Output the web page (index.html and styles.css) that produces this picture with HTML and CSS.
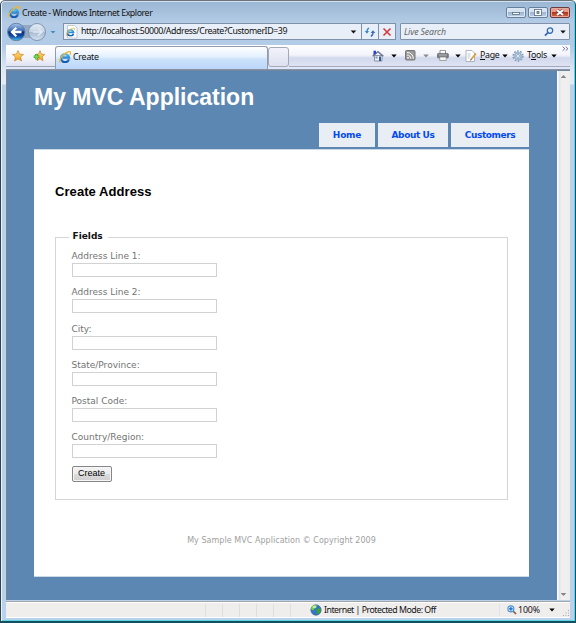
FILE: index.html
```html
<!DOCTYPE html>
<html lang="en">
<head>
<meta charset="utf-8">
<title>Create</title>
<link rel="stylesheet" href="styles.css">
</head>
<body>
<svg class="defs" width="0" height="0" aria-hidden="true">
  <defs>
    <linearGradient id="eBlue" x1="0" y1="0" x2="0" y2="1"><stop offset="0" stop-color="#49b5ee"/><stop offset="1" stop-color="#1358b0"/></linearGradient>
    <linearGradient id="back" x1="0" y1="0" x2="0" y2="1"><stop offset="0" stop-color="#a9c7ee"/><stop offset=".42" stop-color="#3c6cb8"/><stop offset=".5" stop-color="#0a2f7c"/><stop offset=".75" stop-color="#1450a8"/><stop offset="1" stop-color="#45c6f5"/></linearGradient>
    <linearGradient id="fwd" x1="0" y1="0" x2="0" y2="1"><stop offset="0" stop-color="#e4edf7"/><stop offset=".48" stop-color="#c6d3e2"/><stop offset=".52" stop-color="#a9bbd0"/><stop offset="1" stop-color="#d3e3f3"/></linearGradient>
    <linearGradient id="gold" x1="0" y1="0" x2="0" y2="1"><stop offset="0" stop-color="#ffe98a"/><stop offset="1" stop-color="#f59a16"/></linearGradient>
    <symbol id="ie" viewBox="0 0 12 12">
      <path d="M9.900 8.300A4 4 0 1 1 10 6.500H3.600" fill="none" stroke="url(#eBlue)" stroke-width="2.300"/>
      <path d="M1.400 11.400C-.2 10.600.9 7.400 3.800 4.400 7.100 1.200 10.400-.1 11.400 1c.5.600.2 1.800-.5 2.900" fill="none" stroke="#f2b632" stroke-width="1.300"/>
    </symbol>
  </defs>
</svg>
<div class="window">
  <header class="titlebar">
    <svg class="ie" width="12" height="12"><use href="#ie"/></svg>
    <span class="caption">Create - Windows Internet Explorer</span>
    <div class="winbtns">
      <span class="wb"><svg width="18" height="9"><rect x="5.500" y="4.500" width="7" height="2" fill="#fff" stroke="#5b6b7d" stroke-width=".8"/></svg></span>
      <span class="wb"><svg width="18" height="9"><rect x="5.500" y="1.500" width="7" height="6" fill="#fff" stroke="#5b6b7d" stroke-width=".8"/><rect x="8" y="3.500" width="2" height="2" fill="#93a9c1" stroke="#5b6b7d" stroke-width=".8"/></svg></span>
      <span class="wb close"><svg width="18" height="9"><path d="M6 2l6 5M12 2L6 7" stroke="#70403f" stroke-width="3.200"/><path d="M6 2l6 5M12 2L6 7" stroke="#fff" stroke-width="1.900"/></svg></span>
    </div>
  </header>

  <div class="navrow">
    <svg class="travel" width="57" height="20" viewBox="0 0 57 20">
      <rect x="7" y="3" width="27" height="13" fill="#92a9c4"/>
      <circle cx="10.300" cy="10" r="8.700" fill="url(#back)" stroke="#6b83a5"/>
      <path d="M15.500 10H6.500M10.300 5.800L6 10l4.300 4.200" fill="none" stroke="#fff" stroke-width="2.300"/>
      <circle cx="31" cy="10" r="8.500" fill="url(#fwd)" stroke="#8094b0"/>
      <path d="M27 10h8.500M32 6.500l4 3.500-4 3.500" fill="none" stroke="#dfe9f3" stroke-width="1.500"/>
      <path d="M44.500 9h5l-2.500 2.500z" fill="#4689bf"/>
    </svg>
    <div class="address">
      <svg class="pageicon" width="12" height="14" viewBox="0 0 12 14"><path d="M1.500.5h7l2.500 2.500v10h-9.500z" fill="#fff" stroke="#b6bdc6" stroke-width=".8"/><use href="#ie" x="0" y="2.500" width="9" height="9"/></svg>
      <span class="url">http://localhost:50000/Address/Create?CustomerID=39</span>
      <svg class="drop" width="7" height="4"><path d="M.7.500h5.600L3.500 3.500z" fill="#111"/></svg>
      <span class="cell"><svg width="12" height="12"><path d="M2.800 6.500C2.800 4 3.500 2.800 5 2" fill="none" stroke="#318bc4" stroke-width="1.400"/><path d="M.8 5h4.200L2.900 7.700z" fill="#318bc4"/><path d="M9 5.500C9.200 8 8.500 9.500 6.800 10.300" fill="none" stroke="#3b6fb8" stroke-width="1.400"/><path d="M6.700 7h4.600L9 4.200z" fill="#3b6fb8"/></svg></span>
      <span class="cell stop"><svg width="10" height="10"><path d="M1.500 1.500l7 7M8.500 1.500l-7 7" stroke="#d33b3c" stroke-width="1.600"/></svg></span>
    </div>
    <div class="search">
      <span>Live Search</span>
      <svg width="10" height="10"><circle cx="6" cy="3.600" r="2.700" fill="#e0f0ff" stroke="#3467ae" stroke-width="1.300"/><path d="M4 5.500L1 8.700" stroke="#3467ae" stroke-width="1.800"/></svg>
      <svg class="sdrop" width="6" height="4"><path d="M.300.500h5.400L3 3.500z" fill="#111"/></svg>
    </div>
  </div>

  <div class="tabrow">
    <div class="favs">
      <svg width="12" height="12" viewBox="0 0 12 12"><path d="M6 .6l1.600 3.600 3.900.3-3 2.500 1 4L6 8.900 2.500 11l1-4L.5 4.500l3.900-.3z" fill="url(#gold)" stroke="#c98522" stroke-width=".7"/></svg>
      <svg width="12" height="12" viewBox="0 0 12 12"><path d="M7 .6l1.300 3.500 3.400.4-2.500 2.400.8 3.900L7 8.700 4 10.700l.8-3.800L2.200 4.500l3.400-.4z" fill="url(#gold)" stroke="#c98522" stroke-width=".7"/><path d="M3.500 4v5.600M.7 6.800h5.600" stroke="#3b9a2c" stroke-width="2.600"/><path d="M3.500 4.500v4.600M1.200 6.800h4.600" stroke="#7ad653" stroke-width="1.500"/></svg>
    </div>
    <div class="tab"><svg width="12" height="12"><use href="#ie"/></svg><span>Create</span></div>
    <div class="newtab"></div>
    <div class="tools">
      <svg class="t-home" width="12" height="12" viewBox="0 0 12 12"><path d="M2.500 5.500h7.500v5.500H2.500z" fill="#eef0f4" stroke="#777f8d" stroke-width=".8"/><path d="M.7 6.300L6 1.700 11.400 6.300" fill="none" stroke="#6a7796" stroke-width="1.500"/><path d="M1.500.8H4v2.500l-2.500 2z" fill="#2b3fd0"/><path d="M7 6.500h2V11H7z" fill="#2a5ca0"/><path d="M3.500 6.500h2v2h-2z" fill="#7893bd"/></svg>
      <svg class="dd a" width="6" height="4"><path d="M.3.500h5.400L3 3.500z"/></svg>
      <svg class="t-rss" width="11" height="11" viewBox="0 0 11 11"><rect x=".5" y=".5" width="9.500" height="9.500" rx="1" fill="#9a9a9a" stroke="#777"/><circle cx="3" cy="7.800" r=".9" fill="#fff"/><path d="M2 5a3.500 3.500 0 0 1 3.700 3.700M2 2.500a6 6 0 0 1 6.300 6.300" fill="none" stroke="#fff"/></svg>
      <svg class="dd b" width="6" height="4"><path d="M.3.500h5.400L3 3.500z"/></svg>
      <svg class="t-print" width="12" height="11" viewBox="0 0 12 11"><path d="M3 .4h5.500v4H3z" fill="#fff" stroke="#777" stroke-width=".8"/><rect x=".4" y="3.400" width="11" height="4.500" rx="1" fill="#7b7d82" stroke="#55575b" stroke-width=".6"/><path d="M2 5h8" stroke="#bbb"/><path d="M2.700 7h6.500v3.500H2.700z" fill="#f4f4f4" stroke="#888" stroke-width=".7"/></svg>
      <svg class="dd c" width="6" height="4"><path d="M.3.500h5.400L3 3.500z"/></svg>
      <svg class="t-page" width="12" height="12" viewBox="0 0 12 12"><path d="M1 .5h6L9.500 3v8.500H1z" fill="#fff" stroke="#9ba6b3" stroke-width=".8"/><path d="M2.500 4h3M2.500 6h3M2.500 8h2" stroke="#aeb7c5" stroke-width=".8"/><path d="M11 3.500L6 9.500" stroke="#d5a338" stroke-width="1.800"/><path d="M6.300 9L5.500 10.500" stroke="#555"/></svg>
      <span class="t-text page-t"><u>P</u>age</span>
      <svg class="dd d" width="6" height="4"><path d="M.3.500h5.400L3 3.500z"/></svg>
      <svg class="t-gear" width="12" height="12" viewBox="0 0 12 12"><circle cx="6" cy="6" r="4.900" fill="none" stroke="#8199b3" stroke-width="1.500" stroke-dasharray="1.700 1.379"/><circle cx="6" cy="6" r="3.300" fill="#e3ebf4" stroke="#9cb7d2" stroke-width="2"/><circle cx="6" cy="6" r="1.500" fill="#fff" stroke="#758ba5" stroke-width=".7"/></svg>
      <span class="t-text tools-t">T<u>o</u>ols</span>
      <svg class="dd e" width="6" height="4"><path d="M.3.500h5.400L3 3.500z"/></svg>
      <svg class="more" width="7" height="6"><path d="M.7.700L2.800 2.700.7 4.700M3.800.7l2.100 2-2.100 2" fill="none" stroke="#475fa8" stroke-width=".9"/></svg>
    </div>
  </div>

  <div class="viewport">
    <div class="page">
      <h1>My MVC Application</h1>
      <nav><a>Home</a><a>About Us</a><a>Customers</a></nav>
      <main>
        <h2>Create Address</h2>
        <form class="fields">
          <div class="legend">Fields</div>
          <div class="field"><label for="a1">Address Line 1:</label><input id="a1"></div>
          <div class="field"><label for="a2">Address Line 2:</label><input id="a2"></div>
          <div class="field"><label for="ci">City:</label><input id="ci"></div>
          <div class="field"><label for="st">State/Province:</label><input id="st"></div>
          <div class="field"><label for="pc">Postal Code:</label><input id="pc"></div>
          <div class="field"><label for="co">Country/Region:</label><input id="co"></div>
          <button type="button">Create</button>
        </form>
        <footer>My Sample MVC Application © Copyright 2009</footer>
      </main>
    </div>
    <div class="scroll">
      <svg width="7" height="5"><path d="M.700 4L3.500 1l2.800 3z" fill="#858585"/></svg>
      <svg width="7" height="5"><path d="M.700 1h5.600L3.500 4z" fill="#858585"/></svg>
    </div>
  </div>

  <div class="status">
    <div class="panes"><i></i><i></i><i></i><i></i><i></i><i></i></div>
    <svg class="globe" width="12" height="12" viewBox="0 0 12 12"><circle cx="6" cy="6" r="5.200" fill="#3175c4" stroke="#4a6c92" stroke-width=".7"/><path d="M2 2.500C4 .8 6 .7 7 1.500L5.500 4 4 4.500 3.500 6.500 1 5z" fill="#81d33f"/><path d="M6 5.500l3-1.500 2 1.500-1.200 3.500-2 1.500L7 8.500z" fill="#3ba23a"/><ellipse cx="4.500" cy="3" rx="2" ry="1.200" fill="#e2fad5" opacity=".65"/></svg>
    <span class="zone">Internet | Protected Mode: Off</span>
    <div class="zoom">
      <svg width="10" height="10"><path d="M6 6l3 3" stroke="#85613f" stroke-width="1.700"/><circle cx="3.900" cy="3.900" r="3" fill="#e4f4ff" stroke="#4b91d3" stroke-width="1.100"/><path d="M3.900 2v3.800M2 3.900h3.800" stroke="#1566c1" stroke-width="1.200"/></svg>
      <span>100%</span>
      <svg class="zdrop" width="6" height="4"><path d="M.3.500h5.400L3 3.500z"/></svg>
    </div>
    <svg class="grip" width="7" height="7"><path d="M5 0h1v1H5zM2.500 2.500h1v1h-1zM5 2.500h1v1H5zM0 5h1v1H0zM2.500 5h1v1h-1zM5 5h1v1H5z" fill="#aaa"/></svg>
  </div>
</div>
</body>
</html>
```
FILE: styles.css
```css
* { box-sizing: border-box; }
body { margin: 0; overflow: hidden; }
svg { display: block; flex: none; }
.defs { position: absolute; }
span { white-space: nowrap; }

.window {
  width: 576px; height: 623px;
  padding: 1px 4px 4px 5px;
  border: 1px solid #30434d;
  border-top-color: #6c747b;
  border-right: 1px solid #0b5663;
  border-bottom: 2px solid #11515b;
  border-radius: 5px 5px 0 0;
  background: linear-gradient(#9ab6d3, #b4cce6 22px, #b2cbe6 45px, #dfe8f3 70px, #e3ebf6 83px, #b9d1ea 84px, #b9d1ea);
  box-shadow: inset 1px 0 #e9f3fb, inset -1px 0 #54d4ef, inset 0 -1px #5bd4e7, inset 0 1px #d4e2ef;
  font-family: "Noto Sans", "Open Sans", sans-serif;
  font-size: 8.8px; color: #111;
  display: flex; flex-direction: column;
}

.titlebar { height: 20px; display: flex; padding: 4px 1px 0 2px; flex: none; }
.caption { margin: 1px 0 0 2px; line-height: 12px; letter-spacing: -.43px; }
.winbtns { margin: 1px 0 0 auto; display: flex; gap: 2px; }
.wb { width: 20px; height: 11px; border: 1px solid #66809d; border-radius: 2px; background: linear-gradient(#d5e3f1 45%, #9cb5d0 50%, #bfd5e8); box-shadow: inset 0 0 0 1px #dce9f5; }
.wb.close { border-color: #703a3c; background: linear-gradient(#e59c8d 45%, #b33621 50%, #d56b48); box-shadow: inset 0 0 0 1px #e8a798; }

.navrow { height: 23px; display: flex; align-items: flex-start; flex: none; }
.address, .search { height: 17px; margin-top: 1px; border: 1px solid #7f91a8; background: #e8eff8; display: flex; align-items: center; }
.address { width: 333px; padding-left: 2px; }
.url { flex: 1; margin: 0 0 1px 3px; line-height: 12px; letter-spacing: -.4px; }
.drop { margin-right: 4px; }
.cell { width: 17px; height: 15px; border-left: 1px solid #7f91a8; display: flex; align-items: center; justify-content: center; }
.search { width: 170px; margin-left: 4px; padding-left: 3px; border-radius: 1px; }
.search span { flex: 1; font-style: italic; color: #666; line-height: 12px; letter-spacing: -.15px; }
.sdrop { margin: 0 3px 0 6px; }

.tabrow { height: 25px; display: flex; flex: none; width: 564px; background: linear-gradient(#fff, #f3f4fb 10px, #d3d9ed 13px, #dfe3f3 21px, #dfe7fa 22px, #dfe7fa 24px, #8a93a4 24px); }
.favs { flex: none; width: 49px; height: 22px; padding: 5px 0 0 6px; display: flex; gap: 9px; border-bottom: 1px solid #9da4b3; background: linear-gradient(#fff, #f3f4fb 60%, #dfe2f1); }
.tab { flex: none; width: 213px; height: 23px; margin-top: 1px; border: 1px solid #929ba9; border-bottom: 0; border-radius: 3px 3px 0 0; background: linear-gradient(#fff, #e3f0fe 45%, #cbe2fb 55%, #bcd6f9); display: flex; padding: 4px 0 0 3px; }
.tab span { line-height: 12px; margin-left: 2px; letter-spacing: -.2px; }
.newtab { flex: none; width: 21px; height: 20px; margin-top: 2px; border: 1px solid #a5a9b5; border-radius: 3px; background: linear-gradient(#f2f3fb, #dde0ef); }
.tools { flex: 1; min-width: 0; height: 22px; display: flex; align-items: center; padding-left: 83px; border-bottom: 1px solid #a5a9b9; }
.dd.a { margin: 0 8px 0 7px; }
.dd.b { margin: 0 8px 0 7px; fill: #888; }
.dd.c { margin: 0 4px 0 6px; }
.dd.d { margin: 0 4px 0 2px; }
.dd.e { margin-left: 2px; }
.t-text { line-height: 13px; letter-spacing: -.3px; flex: none; }
.page-t { width: 20px; margin-left: 3px; }
.tools-t { width: 22px; margin-left: 3px; }
.more { margin: -13px 0 0 5px; }

.viewport { height: 530px; display: flex; flex: none; width: 564px; border-top: 1px solid #70879f; }
.page { width: 551px; background: #5c87b2; border-left: 1px solid #7b8590; padding: 0 0 0 27px; }
h1 { margin: 0; padding-top: 12px; height: 52px; font: bold 23px/28px "Liberation Sans", Arial, sans-serif; color: #fff; white-space: nowrap; }
nav { width: 495px; height: 26px; display: flex; justify-content: flex-end; gap: 3px; }
nav a { height: 24px; width: 56px; background: #e8eef4; text-align: center; color: #034af3; font: bold 9px/24px "DejaVu Sans", Verdana, sans-serif; letter-spacing: -.4px; white-space: nowrap; }
nav a:first-child { letter-spacing: -.2px; }
nav a:nth-child(2) { width: 70px; }
nav a:nth-child(3) { width: 78px; }
main { width: 495px; height: 428px; background: #fff; border: 1px solid #cbd9e6; border-width: 1px 0; padding: 34px 21px 0; color: #737373; font: 9px/12px "DejaVu Sans", Verdana, sans-serif; }
h2 { margin: 0; height: 53px; font: bold 13px/16px "Liberation Sans", Arial, sans-serif; color: #000; letter-spacing: .07px; }
.fields { width: 453px; height: 263px; border: 1px solid #d5d5d5; padding: 0 15.5px; }
.legend { width: 39px; height: 12px; margin: -8px 0 6px -3px; padding-left: 4px; background: #fff; color: #111; font-weight: bold; }
.field { height: 36.25px; padding-top: 2px; }
label { display: block; height: 13px; line-height: 12px; white-space: nowrap; }
input { display: block; width: 145.5px; height: 14px; border: 1px solid #d2d2d2; padding: 0; background: #fff; }
button { display: block; width: 40px; height: 16px; padding: 0; border: 1px solid #858585; border-radius: 2px; background: linear-gradient(#f3f3f3, #ebebeb 48%, #dcdcdc 52%, #cfcfcf); box-shadow: inset 0 0 0 1px #f6f6f6; font: 9px/13px "Liberation Sans", Arial, sans-serif; color: #000; }
footer { margin-top: 35px; text-align: center; font-size: 8px; letter-spacing: .04px; color: #a0a0a0; }
.scroll { width: 13px; background: linear-gradient(90deg, #fff 0 1px, #e3e3e3 2px, #f0f0f0 5px, #eee); display: flex; flex-direction: column; justify-content: space-between; align-items: center; padding: 3px 0 3px; }

.status { height: 17px; margin-top: 1px; width: 564px; display: flex; align-items: center; flex: none; background: #f0eded; border-top: 1px solid #a4a4a4; box-shadow: inset 0 1px #fff, inset 0 -1px #fff; }
.panes { width: 304px; padding-left: 199px; display: flex; }
.panes i { width: 17px; height: 13px; border-left: 1px solid #dedede; flex: none; }
.zone { width: 176px; margin-left: 2px; line-height: 12px; letter-spacing: -.5px; border-right: 1px solid #e3e1e1; }
.zoom { width: 64px; padding-left: 7px; display: flex; align-items: center; }
.zoom span { margin-left: 1px; width: 23px; line-height: 12px; letter-spacing: -.15px; }
.zdrop { margin-left: 8px; }
.grip { margin: 6px 0 0 -1px; }
```
